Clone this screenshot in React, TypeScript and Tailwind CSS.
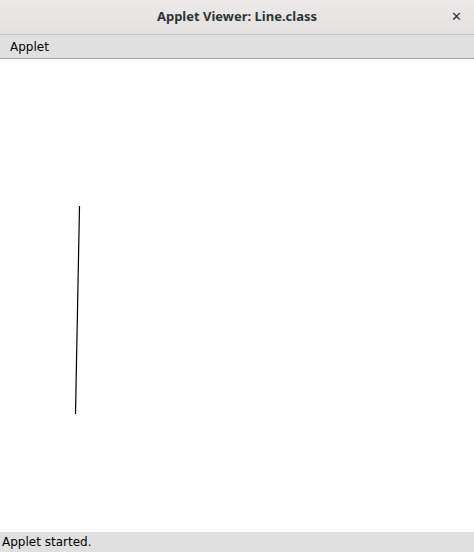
import React from "react";

export default function App() {
  return (
    <div className="w-[474px] h-[552px] flex flex-col bg-white overflow-hidden" style={{ fontFamily: '"DejaVu Sans", sans-serif' }}>
      <div className="h-[35px] shrink-0 relative flex items-center justify-center bg-gradient-to-b from-[#ebeae9] to-[#e2e1df] border-b border-[#c8c6c3]">
        <span className="text-[13px] font-bold text-[#2e3436]" style={{ fontFamily: '"Noto Sans", sans-serif' }}>Applet Viewer: Line.class</span>
        <span className="absolute right-[12px] top-[10px] text-[13px] font-bold text-[#2e3436] leading-none">✕</span>
      </div>
      <div className="h-[24px] shrink-0 flex items-center px-[10px] bg-[#e0e0e0] border-b border-[#a8a8a8]">
        <span className="text-[12px] text-black">Applet</span>
      </div>
      <div className="flex-1 relative bg-white">
        <svg className="absolute inset-0" width="474" height="473">
          <line x1="79.5" y1="147" x2="75.5" y2="355" stroke="#000" strokeWidth="1.2" />
        </svg>
      </div>
      <div className="h-[20px] shrink-0 flex items-center px-[2px] bg-[#e0e0e0]">
        <span className="text-[12px] text-black">Applet started.</span>
      </div>
    </div>
  );
}
